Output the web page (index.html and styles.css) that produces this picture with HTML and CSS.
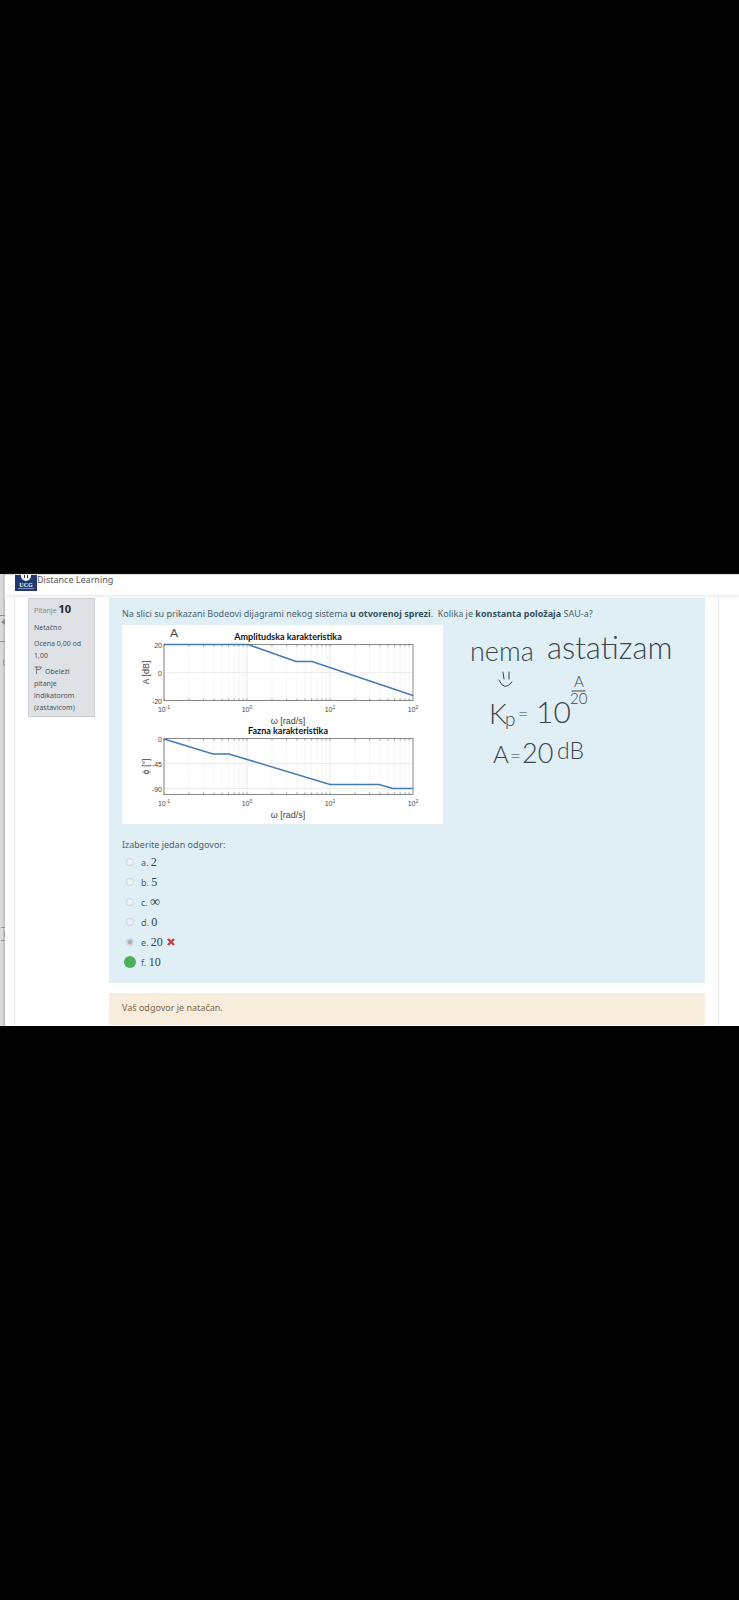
FILE: index.html
```html
<!DOCTYPE html>
<html lang="sr-Latn">
<head>
<meta charset="utf-8">
<meta name="viewport" content="width=device-width, initial-scale=1">
<title>Distance Learning</title>
<link rel="stylesheet" href="styles.css">
</head>
<body>
<div class="screen">
  <div class="edge" aria-hidden="true">
    <svg class="edge-marks" viewBox="0 0 5 452"><path d="M0 41.500h5M0 67.500h5M1 353.500h4M1 366.500h4" stroke="#929292"/><path d="M5 45l-4 3 4 3z" fill="#888"/><path d="M3.500 86v5h2M3.500 86h2M4.500 357v6" stroke="#999" fill="none"/></svg>
  </div>
  <div class="page">
    <header class="topbar">
      <svg class="logo" viewBox="0 0 22 16" role="img" aria-label="UCG">
        <rect width="22" height="16" fill="#21396f"/>
        <path d="M6 0v1q0 4 5 5 5-1 5-5V0h-3v3h-1V0h-2v3H9V0z" fill="#fff"/>
        <text x="11" y="12" text-anchor="middle" class="logo-text">UCG</text>
        <path d="M3 13.500h16" stroke="#8290b1"/>
      </svg>
      <span class="site">Distance Learning</span>
    </header>
    <main class="content">
      <aside class="info">
        <h1 class="number">Pitanje <b>10</b></h1>
        <p>Netačno</p>
        <p>Ocena 0,00 od 1,00</p>
        <a class="flag" href="#flag"><svg class="flag-icon" viewBox="0 0 8 8"><path d="M2.500 8V1M.500 1h7L6 3.500H2.500" fill="none" stroke="#777"/></svg>Obeleži pitanje indikatorom (zastavicom)</a>
      </aside>
      <div class="column">
        <section class="question">
          <p class="prompt">Na slici su prikazani Bodeovi dijagrami nekog sistema <b>u otvorenoj sprezi</b>.&nbsp; Kolika je <b>konstanta položaja</b> SAU-a?</p>
          <div class="figures">
            <svg class="plot" id="plot" viewBox="0 0 321 199" role="img" aria-label="Bodeovi dijagrami"></svg>
            <svg class="notes" viewBox="0 0 262 199">
              <text x="27" y="36" font-size="27">nema</text>
              <text x="104" y="34" font-size="31">astatizam</text>
              <path d="M60 47l1 7M66 47v7M56 55q5 12 13 2" class="pen"/>
              <text x="46" y="99" font-size="28">K</text>
              <text x="62" y="101" font-size="19">p</text>
              <text x="75" y="95" font-size="18">=</text>
              <text x="93" y="98" font-size="30">10</text>
              <text x="131" y="62" font-size="15">A</text>
              <path d="M129 66h13" class="pen"/>
              <text x="127" y="79" font-size="15">20</text>
              <text x="50" y="138" font-size="24">A</text>
              <text x="67" y="138" font-size="19">=</text>
              <text x="79" y="138" font-size="27">20</text>
              <text x="114" y="134" font-size="23">dB</text>
            </svg>
          </div>
          <fieldset class="answers">
            <legend>Izaberite jedan odgovor:</legend>
            <label><input type="radio" name="answer"><span>a. <i>2</i></span></label>
            <label><input type="radio" name="answer"><span>b. <i>5</i></span></label>
            <label><input type="radio" name="answer"><span>c. <i class="infinity">∞</i></span></label>
            <label><input type="radio" name="answer"><span>d. <i>0</i></span></label>
            <label><input type="radio" name="answer" checked><span>e. <i>20</i></span><svg class="wrong" viewBox="0 0 8 8" role="img" aria-label="Netačno"><path d="M1 1l6 6M7 1L1 7" stroke="#bd4343" stroke-width="2.400"/></svg></label>
            <label><input type="radio" name="answer" class="marked"><span>f. <i>10</i></span></label>
          </fieldset>
        </section>
        <section class="feedback">Vaš odgovor je natačan.</section>
      </div>
    </main>
  </div>
</div>
<script src="plot.js"></script>
</body>
</html>
```
FILE: styles.css
```css
* { box-sizing: border-box; }
body {
  margin: 0;
  min-height: 100vh;
  display: flex;
  flex-direction: column;
  justify-content: center;
  background: #000;
  font: 9px/12px "Noto Sans", "Open Sans", sans-serif;
  color: #4b555c;
}
p, h1, fieldset { margin: 0; padding: 0; border: 0; font-weight: 400; }
.screen { display: flex; background: #fefefe; }
.edge { width: 5px; flex: none; background: linear-gradient(90deg, #dadada 50%, #c4c4c4 60%); }
.edge-marks { display: block; width: 5px; }
.page { flex: 1; min-width: 0; display: flex; flex-direction: column; }
.topbar {
  height: 22px;
  padding-left: 10px;
  display: flex;
  align-items: flex-start;
  border-top: 1px solid #d8d8d8;
  border-bottom: 1px solid #f0f0f0;
  box-shadow: 0 1px 2px #f0f0f0;
}
.logo { width: 22px; height: 16px; }
.logo-text { font: bold 6px "Liberation Serif", serif; fill: #fff; }
.site { font-size: 9px; line-height: 10px; color: #55585c; }
.content {
  flex: 1;
  margin: 0 20px 0 9px;
  padding: 2px 13px 0;
  display: flex;
  align-items: flex-start;
  gap: 14px;
  border: solid #e9e9ec;
  border-width: 0 1px;
}
.info {
  width: 67px;
  flex: none;
  padding: 3px 4px 2px 5px;
  display: flex;
  flex-direction: column;
  gap: 4px;
  border: 1px solid #cccfd4;
  background: #dee1e6;
  font-size: 7px;
}
.number { font-size: 7px; line-height: 14px; color: #858990; }
.number b { font-size: 11px; color: #22262b; }
.flag { color: inherit; text-decoration: none; }
.flag-icon { width: 8px; height: 8px; margin-right: 3px; }
.column { flex: 1; min-width: 0; }
.question { padding: 10px 0 11px 13px; background: #e0eff5; color: #49636f; }
.prompt { margin-bottom: 5px; }
.prompt b { color: #35515e; }
.figures { display: flex; }
.plot { width: 321px; height: 199px; flex: none; background: #fff; font-family: "Liberation Sans", Arial, sans-serif; }
.notes { width: 262px; height: 199px; font-family: Lato, sans-serif; font-weight: 300; fill: #3c454a; }
.pen { fill: none; stroke: #3c454a; stroke-linecap: round; }
.answers { padding-top: 15px; }
.answers legend { padding: 0 0 1px; float: left; width: 100%; }
.answers label { clear: both; display: flex; align-items: center; gap: 7px; height: 20px; padding-left: 4px; }
.answers i { font: 12px/12px "Liberation Serif", serif; color: #2d424c; }
.answers .infinity { font-size: 14px; }
.answers input {
  appearance: none;
  width: 8px;
  height: 8px;
  margin: 0;
  border: 1px solid #cbd3d8;
  border-radius: 50%;
  background: #eef4f8;
}
.answers input:checked { background: radial-gradient(#adb5ba 2px, #e2e9ed 3px); }
.answers .marked { width: 12px; height: 12px; margin: 0 -2px; border: 0; background: #4fae5b; }
.wrong { width: 8px; height: 8px; margin-left: -3px; }
.feedback { height: 32px; margin-top: 10px; padding: 9px 13px; background: #f8ecdd; color: #80694c; }
```
FILE: plot.js
```js
const svg = document.getElementById("plot");
const left = 42, decade = 83, right = left + 3 * decade;
const line = (x1, y1, x2, y2, color) =>
  `<path d="M${x1} ${y1}L${x2} ${y2}" stroke="${color}" stroke-width="1"/>`;
const label = (x, y, text, size, anchor, extra = "") =>
  `<text x="${x}" y="${y}" font-size="${size}" text-anchor="${anchor}" fill="#444" ${extra}>${text}</text>`;

function chart({ top, bottom, title, yTitle, ticks, points }) {
  let out = "";
  for (let d = 0; d < 3; d++) {
    for (let n = 1; n < 10; n++) {
      const x = left + decade * (d + Math.log10(n));
      out += line(x, top, x, bottom, n === 1 ? "#e6e6e6" : "#f5f5f5");
      out += line(x, bottom, x, bottom - 2, "#999") + line(x, top, x, top + 2, "#999");
    }
  }
  for (const [y, text] of ticks) {
    out += line(left, y, right, y, "#ededed") + label(left - 2, y + 3, text, 7, "end");
  }
  out += `<rect x="${left}" y="${top}" width="${right - left}" height="${bottom - top}" fill="none" stroke="#888"/>`;
  ["-1", "0", "1", "2"].forEach((power, i) => {
    out += label(left + decade * i, bottom + 11, `10<tspan dy="-3" font-size="5">${power}</tspan>`, 7, "middle");
  });
  out += `<polyline points="${points}" fill="none" stroke="#437bb0" stroke-width="1.5"/>`;
  out += `<text x="166" y="${top - 5}" font-size="9" text-anchor="middle" fill="#111" font-family="Lato" font-weight="700">${title}</text>`;
  out += label(166, bottom + 23, "ω [rad/s]", 9, "middle");
  out += label(0, 0, yTitle, 9, "middle", `transform="translate(27 ${(top + bottom) / 2}) rotate(-90)"`);
  return out;
}

svg.innerHTML =
  chart({
    top: 19.5, bottom: 75.5, title: "Amplitudska karakteristika", yTitle: "A [dB]",
    ticks: [[19.5, "20"], [47.5, "0"], [75.5, "-20"]],
    points: "42,19.5 126,19.5 174,36.5 190,36.5 291,70.5"
  }) +
  chart({
    top: 113.5, bottom: 169.5, title: "Fazna karakteristika", yTitle: "ϕ [°]",
    ticks: [[113.5, "0"], [138.5, "-45"], [163.5, "-90"]],
    points: "42,114 91,129 107,129 208,159.5 257,159.5 271,163.5 291,163.5"
  }) +
  label(52, 12, "A", 12, "middle", 'font-family="Lato"');
```
